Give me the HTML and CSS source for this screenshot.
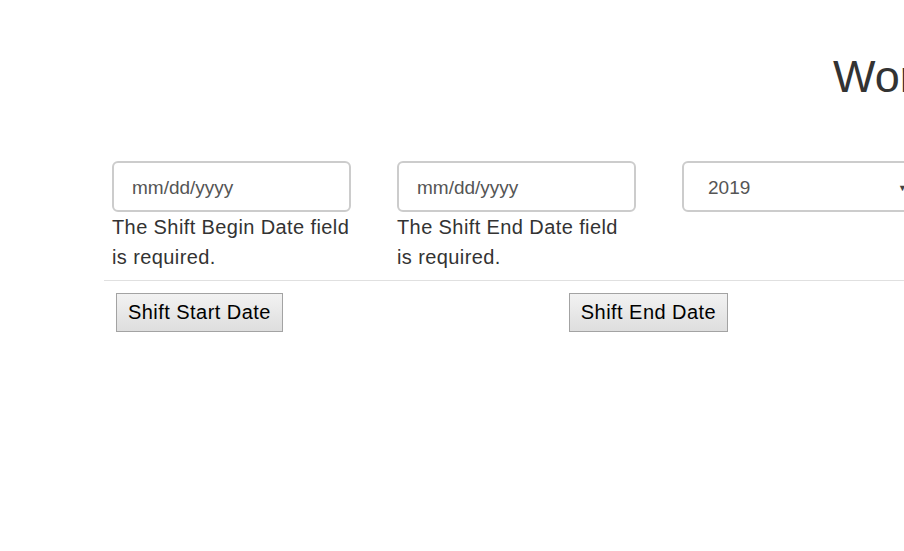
FILE: index.html
```html
<!DOCTYPE html>
<html lang="en">
  <head>
    <meta charset="UTF-8" />
    <title>Work Schedule</title>
    <link rel="stylesheet" href="styles.css">
  </head>
  <body>
    <div class="page">
      <h1 class="title">Work Schedule Report</h1>

      <!-- Filters -->
      <form class="filters">
        <div class="field">
          <input type="text" class="form-input" placeholder="mm/dd/yyyy" />
          <span class="field-error">The Shift Begin Date field is required.</span>
        </div>
        <div class="field">
          <input type="text" class="form-input" placeholder="mm/dd/yyyy" />
          <span class="field-error">The Shift End Date field is required.</span>
        </div>
        <div class="field field-wide">
          <div class="form-select">
            <span>2019</span>
            <span class="caret">&#9660;</span>
          </div>
        </div>
      </form>

      <hr class="divider" />

      <!-- Sort buttons -->
      <div class="sort-row">
        <button type="button" class="sort-btn">Shift Start Date</button>
        <button type="button" class="sort-btn sort-btn-end">Shift End Date</button>
      </div>
    </div>
  </body>
</html>
```

FILE: styles.css
```css
/* General Styles */
html, body {
  overflow: hidden;
}

body {
  margin: 0;
  font-family: "Liberation Sans", Arial, sans-serif;
  font-size: 20px;
  color: #333;
  background: #fff;
}

.page {
  width: 1400px;
  padding-left: 104px;
}

.title {
  margin: 52px 0 0 729px;
  font-size: 45px;
  font-weight: 400;
  line-height: 1.1;
  white-space: nowrap;
  color: #333;
}

.filters {
  display: flex;
  margin: 59px 0 0 8px;
}

.field {
  width: 239px;
  margin-right: 46px;
  display: flex;
  flex-direction: column;
}

.field-wide {
  width: 400px;
}

.form-input,
.form-select {
  box-sizing: border-box;
  height: 51px;
  width: 100%;
  border: 2px solid #ccc;
  border-radius: 6px;
  padding: 3px 18px 0;
  font-family: "Liberation Sans", Arial, sans-serif;
  font-size: 19px;
  color: #555;
  background: #fff;
}

.form-input::placeholder {
  color: #555;
}

.form-select {
  display: flex;
  align-items: center;
  justify-content: space-between;
  padding-left: 24px;
}

.caret {
  font-size: 9px;
  color: #444;
  margin-right: 155px;
}

.field-error {
  line-height: 30px;
  letter-spacing: 0.4px;
}

.divider {
  border: 0;
  border-top: 1px solid #e0e0e0;
  margin: 8px 0 0;
}

.sort-row {
  display: flex;
  margin: 12px 0 0 12px;
}

.sort-btn {
  height: 39px;
  padding: 0 11px;
  font-family: "Liberation Sans", Arial, sans-serif;
  font-size: 20px;
  letter-spacing: 0.45px;
  color: #000;
  background: linear-gradient(#f2f2f2, #dedede);
  border: 1px solid #a3a3a3;
  border-radius: 0;
}

.sort-btn-end {
  margin-left: 286px;
}
```
